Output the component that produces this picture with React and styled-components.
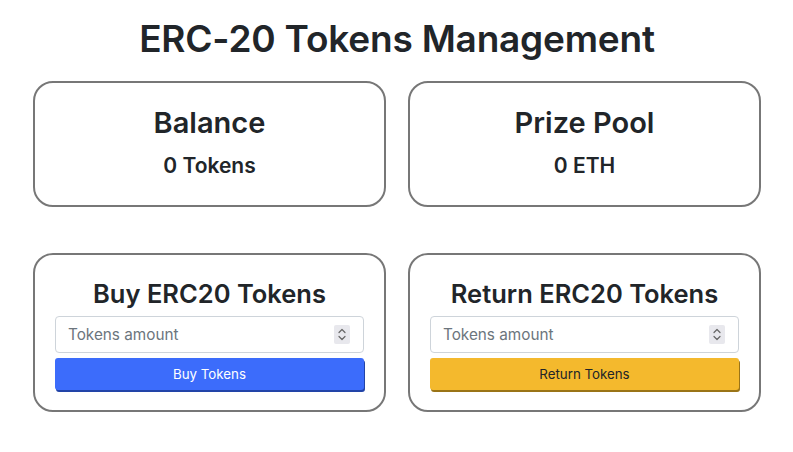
import React from 'react';
import styled, {createGlobalStyle} from 'styled-components';

const GlobalStyle = createGlobalStyle`
        body {
            margin: 0;
            background: #fff;
            font-family: Inter, "Noto Sans", sans-serif;
            color: #212529;
        }
    `,
    Page = styled.div`
        padding: 18px 32px 0 33px;
    `,
    Title = styled.h1`
        margin: 0 0 21px;
        text-align: center;
        font-size: 37px;
        font-weight: 600;
        letter-spacing: -0.2px;
        line-height: 42px;
    `,
    Grid = styled.div`
        display: grid;
        grid-template-columns: 1fr 1fr;
        column-gap: 22px;
        row-gap: 46px;
    `,
    Card = styled.div`
        border: 2px solid #777;
        border-radius: 20px;
        text-align: center;
        padding: ${(p) => p.$pad};
    `,
    StatTitle = styled.h2`
        margin: 0;
        font-size: 29px;
        font-weight: 600;
        line-height: 36px;
    `,
    StatValue = styled.div`
        margin-top: 12px;
        font-size: 21px;
        font-weight: 600;
        line-height: 26px;
    `,
    FormTitle = styled.h3`
        margin: 0 0 7px;
        font-size: 25.5px;
        font-weight: 600;
        line-height: 31px;
    `,
    Field = styled.div`
        display: flex;
        align-items: center;
        height: 37px;
        box-sizing: border-box;
        border: 1px solid #ced4da;
        border-radius: 4px;
        padding: 0 13px 0 12px;
    `,
    Input = styled.input`
        flex: 1;
        min-width: 0;
        padding: 0;
        border: none;
        outline: none;
        background: transparent;
        font-family: inherit;
        font-size: 15.3px;
        color: #212529;
        &::placeholder {
            color: #6c757d;
        }
    `,
    Spinner = styled.span`
        display: flex;
        align-items: center;
        justify-content: center;
        width: 16px;
        height: 19px;
        background: #e8e8ed;
        border-radius: 2px;
    `,
    Button = styled.button`
        display: block;
        width: 100%;
        margin-top: 5px;
        height: 32px;
        border: none;
        border-radius: 3px;
        font-family: inherit;
        font-size: 13.3px;
        background: ${(p) => (p.$variant === 'warning' ? '#f4b92d' : '#3c6cfb')};
        color: ${(p) => (p.$variant === 'warning' ? '#212529' : '#fff')};
        box-shadow: 1px 2px 0 ${(p) => (p.$variant === 'warning' ? '#9a7417' : '#2244a8')};
        cursor: pointer;
    `;

function SpinIcon() {
    return (
        <Spinner>
            <svg width="10" height="15" viewBox="0 0 10 15" fill="none" stroke="#666" strokeWidth="1.2" strokeLinecap="round" strokeLinejoin="round">
                <path d="M2 5.5 L5 2.5 L8 5.5" />
                <path d="M2 9.5 L5 12.5 L8 9.5" />
            </svg>
        </Spinner>
    );
}

function TokenForm({title, action, variant}) {
    return (
        <Card $pad="23px 20px 20px">
            <FormTitle>{title}</FormTitle>
            <Field>
                <Input type="text" placeholder="Tokens amount" />
                <SpinIcon />
            </Field>
            <Button $variant={variant}>{action}</Button>
        </Card>
    );
}

function App() {
    return (
        <Page>
            <GlobalStyle />
            <Title>ERC-20 Tokens Management</Title>
            <Grid>
                <Card $pad="22px 20px 26px">
                    <StatTitle>Balance</StatTitle>
                    <StatValue>0 Tokens</StatValue>
                </Card>
                <Card $pad="22px 20px 26px">
                    <StatTitle>Prize Pool</StatTitle>
                    <StatValue>0 ETH</StatValue>
                </Card>
                <TokenForm title="Buy ERC20 Tokens" action="Buy Tokens" variant="primary" />
                <TokenForm title="Return ERC20 Tokens" action="Return Tokens" variant="warning" />
            </Grid>
        </Page>
    );
}

export default App;
